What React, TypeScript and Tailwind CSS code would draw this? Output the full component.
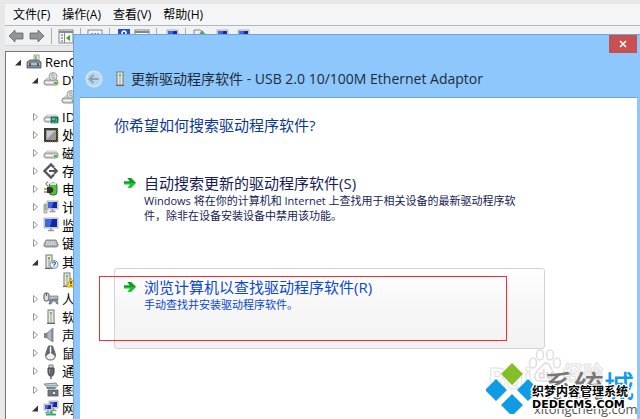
import type { ReactNode } from 'react'

interface Device {
    label: string
    icon: ReactNode
    level?: number
    state?: 'open' | 'closed' | 'leaf'
}

const FONT = "font-['Open_Sans','Noto_Sans_CJK_SC',sans-serif]"

function Icon({ children }: { children: ReactNode }) {
    return (
        <svg viewBox="0 0 16 16" className="size-4 shrink-0" aria-hidden="true">
            {children}
        </svg>
    )
}

function Tower({ x = 5 }: { x?: number }) {
    return (
        <g>
            <rect x={x} y="1" width="6" height="13" fill="#e9e9e4" stroke="#777" strokeWidth="1" />
            <rect x={x + 2} y="3" width="2" height="10" fill="#bfc4bd" />
            <rect x={x + 2} y="3" width="2" height="2" fill="#5fc63a" />
            <path d={`M${x - 1} 14.5h8`} stroke="#666" />
        </g>
    )
}

function Drive() {
    return (
        <g>
            <path d="M2 8.500 4 6h9l2 2.500z" fill="#f2f2f2" stroke="#aaa" strokeWidth=".6" />
            <rect x="1" y="8" width="14" height="5" rx="2" fill="#d4d4d4" stroke="#777" strokeWidth=".8" />
            <path d="M3 10.500h7" stroke="#f8f8f8" />
            <rect x="11" y="10" width="3" height="2" fill="#3fc420" />
        </g>
    )
}

function Disc() {
    return (
        <g>
            <Drive />
            <circle cx="10" cy="4.500" r="4" fill="#e3e3e3" stroke="#888" strokeWidth=".8" />
            <path d="M10 1v7M8 2l4 5" stroke="#9fb49a" strokeWidth=".9" />
            <circle cx="10" cy="4.500" r="1.200" fill="#fff" stroke="#777" strokeWidth=".6" />
        </g>
    )
}

function Screen({ x = 1, y = 1, w = 13, h = 9 }: { x?: number; y?: number; w?: number; h?: number }) {
    return (
        <g>
            <rect x={x} y={y} width={w} height={h} fill="#e4e4e0" stroke="#999" strokeWidth=".7" />
            <rect x={x + 1} y={y + 1} width={w - 2} height={h - 2} fill="#1226a8" />
            <path d={`M${x + 1} ${y + 1}h${w / 2}l-2 ${h - 2}h${2 - w / 2}z`} fill="#3f68e0" />
            <path d={`M${x + w / 2} ${y + h}v2M${x + w / 2 - 3} ${y + h + 2.5}h6`} stroke="#999" strokeWidth="1.600" />
        </g>
    )
}

const groups: Device[][] = [
    [
        {
            label: 'RenCheng',
            level: 0,
            state: 'open',
            icon: (
                <Icon>
                    <path d="M8 1h5v8H8z" fill="#eee" stroke="#888" strokeWidth=".8" />
                    <path d="M10 2v5" stroke="#59bd3e" strokeWidth="1.500" />
                    <path d="m1 8 3-2h8l3 2v6H1z" fill="#7d8b95" stroke="#4d5961" strokeWidth=".8" />
                    <path d="M2 10h12" stroke="#d7e0e6" strokeWidth="1.200" />
                    <path d="M4 9v3m8-3v3" stroke="#34414a" strokeWidth="1.500" />
                </Icon>
            )
        },
        { label: 'DVD/CD-ROM', state: 'open', icon: <Icon><Disc /></Icon> },
        { label: '', level: 2, state: 'leaf', icon: <Icon><Disc /></Icon> }
    ],
    [
        {
            label: 'IDE ATA',
            icon: (
                <Icon>
                    <Drive />
                    <path d="M8 8h7v6H8z" fill="#168c6b" stroke="#12614c" strokeWidth=".7" />
                    <path d="M9 10h3m1 1h1m-4 2v2m3-2v2" stroke="#b5e3a3" />
                </Icon>
            )
        },
        {
            label: '处理器',
            icon: (
                <Icon>
                    <rect x="2" y="2" width="12" height="12" fill="#999" stroke="#3f3d39" strokeWidth="2" />
                    <path d="M4 4h8l-8 8z" fill="#c9c9c9" />
                    <path d="M1 15h14V2" fill="none" stroke="#b38b35" strokeDasharray="1 1" />
                </Icon>
            )
        },
        { label: '磁盘驱动器', icon: <Icon><Drive /></Icon> },
        {
            label: '存储控制器',
            icon: (
                <Icon>
                    <path d="m11 4.500-3-3L1.500 8 8 14.500l3-3" fill="none" stroke="#555" strokeWidth="2.400" />
                    <path d="M6 8h8m-3-3 3 3-3 3" fill="none" stroke="#555" strokeWidth="1.800" />
                </Icon>
            )
        },
        {
            label: '电池',
            icon: (
                <Icon>
                    <rect x="6" y="2" width="8" height="12" rx="3" fill="#55bd42" stroke="#287d2e" />
                    <path d="M7 3h6" stroke="#e0e0e0" strokeWidth="2" />
                    <path d="M4 6h4c3 1 3 5 0 6H4z" fill="#333" />
                    <path d="M1 8h3m-3 3h3" stroke="#a58c35" strokeWidth="1.500" />
                    <path d="M5 5C2 4 3 1 5 1" fill="none" stroke="#444" />
                </Icon>
            )
        },
        {
            label: '计算机',
            icon: (
                <Icon>
                    <Screen x={4} y={2} w={11} h={8} />
                    <path d="M1 5h3v9H1z" fill="#ccc" stroke="#888" strokeWidth=".6" />
                    <path d="M2 6v5" stroke="#41b932" />
                </Icon>
            )
        },
        { label: '监视器', icon: <Icon><Screen x={1} y={1} w={14} h={10} /></Icon> },
        {
            label: '键盘',
            icon: (
                <Icon>
                    <path d="m1 9 2-4h10l2 4v2q-1 1-2 1H3q-1 0-2-1z" fill="#a8adb1" stroke="#777" strokeWidth=".8" />
                    <path d="M3.500 7h9M3 9h10" stroke="#fff" strokeDasharray="1.500 .7" />
                </Icon>
            )
        }
    ],
    [
        {
            label: '其他设备',
            state: 'open',
            icon: (
                <Icon>
                    <Tower x={3} />
                    <circle cx="11" cy="10.500" r="4" fill="#eef4fb" stroke="#7791ae" />
                    <path d="M9.500 9.500q0-1.500 1.500-1.500t1.500 1.300q0 .8-1.500 1.700v.6m0 .7v.8" fill="none" stroke="#315c98" strokeWidth="1.100" />
                </Icon>
            )
        },
        {
            label: '',
            level: 2,
            state: 'leaf',
            icon: (
                <Icon>
                    <Tower x={3} />
                    <path d="m10 6 5 9H5z" fill="#ffd42e" stroke="#bd8c00" strokeWidth=".8" />
                    <path d="M10 9v3m0 1v1" stroke="#222" strokeWidth="1.200" />
                </Icon>
            )
        }
    ],
    [
        {
            label: '人体学输入设备',
            icon: (
                <Icon>
                    <rect x="1" y="2" width="5" height="8" rx="2" fill="#ddd" stroke="#555" />
                    <path d="M3.500 2v3" stroke="#555" />
                    <path d="M6 5h9v4H6z" fill="#bbb" stroke="#777" strokeWidth=".7" />
                    <path d="m7 9-1 4h2l2-3h2l2 3h1l-1-5z" fill="#8295a8" stroke="#55636e" strokeWidth=".7" />
                </Icon>
            )
        },
        { label: '软件设备', icon: <Icon><Tower /></Icon> },
        {
            label: '声音、视频和游戏控制器',
            icon: (
                <Icon>
                    <path d="M1 6h3v5H1z" fill="#7a858c" />
                    <path d="m4 6 6-5v14l-6-4z" fill="#aeb6bb" stroke="#75818a" strokeWidth=".8" />
                    <path d="M9 2v12" stroke="#687680" />
                </Icon>
            )
        },
        {
            label: '鼠标和其他指针设备',
            icon: (
                <Icon>
                    <path d="M5.500 1h4l3 8.500q0 5.500-5 5.500t-5-5.500z" fill="#f2f2f2" stroke="#555" />
                    <path d="M5.500 1H7v7l-4 3V9zm4 0H8v7l4 3V9z" fill="#666" />
                    <path d="M7.500 2v5" stroke="#fff" strokeWidth="1.500" />
                </Icon>
            )
        },
        {
            label: '通用串行总线控制器',
            icon: (
                <Icon>
                    <path d="M6 2h4v4H6z" fill="#ddd" stroke="#777" />
                    <path d="M5 5h6v5l-1.500 3h-3L5 10z" fill="#666" stroke="#444" />
                    <path d="M8 12v4" stroke="#666" strokeWidth="1.500" />
                    <path d="M6.500 6v4" stroke="#999" />
                </Icon>
            )
        }
    ],
    [
        {
            label: '图像设备',
            icon: (
                <Icon>
                    <path d="m1 2 12-1 2 3H3z" fill="#b9d2db" stroke="#667780" strokeWidth=".8" />
                    <path d="M3 5h11l-2 2H4z" fill="#77858c" />
                    <rect x="5" y="8" width="10" height="6" fill="#727d82" stroke="#4b555a" strokeWidth=".8" />
                    <circle cx="11" cy="11" r="2" fill="#d9e5ea" stroke="#555" />
                </Icon>
            )
        },
        {
            label: '网络适配器',
            state: 'open',
            icon: (
                <Icon>
                    <Screen x={6} y={1} w={9} h={7} />
                    <Screen x={1} y={4} w={8} h={6} />
                    <path d="M3 14.500h10M8.500 11v3" stroke="#27b268" strokeWidth="2" />
                </Icon>
            )
        }
    ]
]

const indents = ['pl-2', 'pl-[25px]', 'pl-[43px]']

function DeviceRow({ device }: { device: Device }) {
    const { level = 1, state = 'closed', icon, label } = device
    return (
        <li className={`flex h-[18px] items-center whitespace-nowrap ${indents[level]}`}>
            <svg viewBox="0 0 8 10" className="mr-1 h-[10px] w-2 shrink-0" aria-hidden="true">
                {state === 'open' && <path d="M7 2.500v6H1z" fill="#333" />}
                {state === 'closed' && <path d="M2.500 1.500 6.500 5l-4 3.500z" fill="#fff" stroke="#999" />}
            </svg>
            {icon}
            <span className="ml-[3px] text-[13px] leading-[18px]">{label}</span>
        </li>
    )
}

function Separator() {
    return <span className="mx-[5px] h-4 w-px bg-[#a9abae]" />
}

function ToolButton({ name, children }: { name: string; children: ReactNode }) {
    return (
        <button type="button" aria-label={name} className="mx-px">
            <Icon>{children}</Icon>
        </button>
    )
}

function Toolbar() {
    const page = (
        <>
            <rect x="1" y="2" width="14" height="13" fill="#f6f6f6" stroke="#888" />
            <path d="M1 4h14" stroke="#888" strokeWidth="2" />
        </>
    )
    return (
        <div className="flex h-5 items-center border-b border-[#d5d7da] bg-[#f1f2f4] pl-[2px]">
            <ToolButton name="后退">
                <path d="M1 8 7 2v3h8v6H7v3z" fill="#959595" stroke="#666" strokeWidth=".8" />
            </ToolButton>
            <span className="w-[3px]" />
            <ToolButton name="前进">
                <path d="M15 8 9 2v3H1v6h8v3z" fill="#959595" stroke="#666" strokeWidth=".8" />
            </ToolButton>
            <Separator />
            <ToolButton name="显示控制台树">
                {page}
                <path d="M6.500 5v10" stroke="#888" />
                <path d="M3 7h2m-2 3h2m-2 3h2" stroke="#3b6fb5" />
                <path d="m12 7-4 3 4 3z" fill="#35a92a" />
            </ToolButton>
            <Separator />
            <ToolButton name="属性">
                <rect x="1" y="2" width="14" height="13" fill="#f6f6f6" stroke="#888" />
                <path d="M4 5.500h8" stroke="#999" strokeDasharray="2 1" />
            </ToolButton>
            <Separator />
            <ToolButton name="帮助">
                <rect x="2" y="1" width="12" height="14" fill="#264ec0" />
                <path d="M6 6q0-3 2-3t2 2-2 3v2" fill="none" stroke="#fff" strokeWidth="1.500" />
            </ToolButton>
            <ToolButton name="操作">{page}</ToolButton>
            <Separator />
            <ToolButton name="扫描">
                <Screen x={4} y={2} w={11} h={9} />
            </ToolButton>
            <Separator />
            <div className="flex gap-[3px]">
                <ToolButton name="更新驱动程序">
                    <path d="M2 2h6l3 3v9H2z" fill="#eee" stroke="#888" />
                    <path d="m6 8 4-6 5 6z" fill="#55a852" />
                </ToolButton>
                <ToolButton name="卸载">
                    <Screen x={4} y={2} w={11} h={9} />
                </ToolButton>
                <ToolButton name="禁用">
                    <Screen x={4} y={2} w={11} h={9} />
                </ToolButton>
            </div>
        </div>
    )
}

function GreenArrow() {
    return (
        <svg viewBox="0 0 14 14" className="mt-[3px] size-[14px] shrink-0" aria-hidden="true">
            <path d="M1 5.500h6L4.500 2H8l5 5-5 5H4.500L7 8.500H1z" fill="#12c832" />
            <path d="M1 5.500h6L4.500 2H8l5 5H1z" fill="#129a25" />
        </svg>
    )
}

function CommandLink({ title, children, active = false }: { title: string; children: ReactNode; active?: boolean }) {
    return (
        <button
            type="button"
            className={`flex h-[81px] w-full items-start gap-[7px] rounded-[3px] border pt-2 pr-5 pl-2 text-left ${
                active ? 'border-[#d2d2d2] bg-linear-to-b from-white via-[#f6f6f6] to-[#f3f3f3] text-[#0a46d8]' : 'border-transparent text-[#151c55]'
            }`}>
            <GreenArrow />
            <span className="flex flex-col">
                <span className="text-[15px] leading-5">{title}</span>
                <span className="text-[11px] leading-[15px]">{children}</span>
            </span>
        </button>
    )
}

function UpdateDialog() {
    return (
        <section role="dialog" aria-label="更新驱动程序软件" className="absolute top-[34px] right-0 bottom-0 left-[73px] flex flex-col border-t border-l border-[#6ba5db] bg-[#8dc7fb] pr-[3px] pl-[6px]">
            <div className="flex justify-end">
                <button type="button" aria-label="关闭" className="flex h-[18px] w-7 items-center justify-center bg-[#c75050]">
                    <svg viewBox="0 0 8 8" className="size-2" aria-hidden="true">
                        <path d="m1 1 6 6m0-6L1 7" stroke="#fff" strokeWidth="1.600" />
                    </svg>
                </button>
            </div>
            <header className="flex h-11 items-center pt-2 pl-[5px]">
                <button type="button" aria-label="返回">
                    <svg viewBox="0 0 18 18" className="size-[18px]" aria-hidden="true">
                        <circle cx="9" cy="9" r="7.800" fill="#b5d7f2" stroke="#dbe6ee" strokeWidth="1.400" />
                        <path d="M13.500 9H5m3.500-4L4.500 9l4 4" fill="none" stroke="#8ba3b6" strokeWidth="2" />
                    </svg>
                </button>
                <span className="ml-[9px] flex">
                    <Icon><Tower /></Icon>
                </span>
                <h1 className="ml-[3px] text-[14px] leading-5 whitespace-nowrap text-[#1e2c3a]">更新驱动程序软件 - USB 2.0 10/100M Ethernet Adaptor</h1>
            </header>
            <div className="flex-1 border-t border-[#6ba5db] bg-white pt-[17px] pr-[92px] pl-[34px]">
                <h2 className="text-[15px] leading-5 text-[#0b3796]">你希望如何搜索驱动程序软件?</h2>
                <div className="mt-[29px] flex flex-col gap-[23px]">
                    <CommandLink title="自动搜索更新的驱动程序软件(S)">
                        Windows 将在你的计算机和 Internet 上查找用于相关设备的最新驱动程序软件，除非在设备安装设备中禁用该功能。
                    </CommandLink>
                    <CommandLink title="浏览计算机以查找驱动程序软件(R)" active>
                        手动查找并安装驱动程序软件。
                    </CommandLink>
                </div>
            </div>
        </section>
    )
}

const OUTLINE = '[text-shadow:1px_0_#fff,-1px_0_#fff,0_1px_#fff,0_-1px_#fff,1px_1px_#fff,-1px_-1px_#fff,1px_-1px_#fff,-1px_1px_#fff,2px_0_#fff,-2px_0_#fff]'

function Watermarks() {
    return (
        <div className="pointer-events-none absolute right-0 bottom-0 h-[70px] w-[152px] whitespace-nowrap">
            <span className="absolute top-[11px] left-0 text-[28px] leading-9 font-bold text-white [-webkit-text-stroke:1px_#e2e2e2]">Bai</span>
            <span className="absolute top-[11px] left-[75px] text-[20px] leading-7 font-bold text-white [-webkit-text-stroke:1px_#e2e2e2]">经验</span>
            <svg viewBox="0 0 34 34" className="absolute top-0 left-[40px] size-[34px]" fill="#fff" stroke="#dedede" strokeWidth="1.500" aria-hidden="true">
                <ellipse cx="5" cy="14" rx="3.500" ry="5" />
                <ellipse cx="12" cy="6" rx="3.500" ry="5" />
                <ellipse cx="22" cy="6" rx="3.500" ry="5" />
                <ellipse cx="29" cy="14" rx="3.500" ry="5" />
                <path d="M17 14q4 0 6 5t4 7q1 6-6 6H12q-6 0-5-6 1-3 4-6t6-6z" />
            </svg>
            <span className="absolute top-[18px] left-[50px] text-[12px] leading-4 font-bold text-[#dedede]">du</span>
            <svg viewBox="0 0 52 52" className="absolute top-[13px] left-[-2px] size-[52px]" aria-hidden="true">
                <path d="m26 1 11 11-11 11-11-11z" fill="#83bf27" />
                <path d="m10 17 11 11-11 11L-1 28zM42 17l11 11-11 11-11-11zM26 32l11 11-11 11-11-11z" fill="#119be4" />
            </svg>
            <span className="absolute top-[17px] left-[56px] text-[30px] leading-10 font-medium text-[#777]">
                系统<span className="text-[#119be4]">城</span>
            </span>
            <span className="absolute top-[50px] left-[46px] text-[13px] leading-5 text-[#555]">xitongcheng.com</span>
            <span className={`absolute top-[35px] left-[44px] text-[12px] leading-4 font-bold text-black ${OUTLINE}`}>织梦内容管理系统</span>
            <span className={`absolute top-[48px] left-[44px] font-['DejaVu_Sans',sans-serif] text-[11px] leading-4 font-bold text-black ${OUTLINE}`}>DEDECMS.COM</span>
        </div>
    )
}

export default function App() {
    return (
        <main className={`relative flex min-h-screen flex-col overflow-hidden bg-[#e8e8e8] pt-1 pl-[5px] text-black ${FONT}`}>
            <nav className="flex h-[22px] items-center gap-3 border-b border-[#b5b7ba] bg-[#f4f5f7] pl-2 text-[12px] leading-4">
                <button type="button">文件(F)</button>
                <button type="button">操作(A)</button>
                <button type="button">查看(V)</button>
                <button type="button">帮助(H)</button>
            </nav>
            <Toolbar />
            <div className="mt-[5px] flex-1 border-t border-l border-[#777] bg-white pt-px">
                <div className="flex flex-col gap-px">
                    {groups.map((group, i) => (
                        <ul key={i}>
                            {group.map((device, j) => (
                                <DeviceRow key={j} device={device} />
                            ))}
                        </ul>
                    ))}
                </div>
            </div>
            <UpdateDialog />
            {/* 用户标注的红框 */}
            <div className="pointer-events-none absolute top-[276px] right-[133px] left-[99px] h-[65px] border border-[#f03030]" />
            <Watermarks />
        </main>
    )
}
